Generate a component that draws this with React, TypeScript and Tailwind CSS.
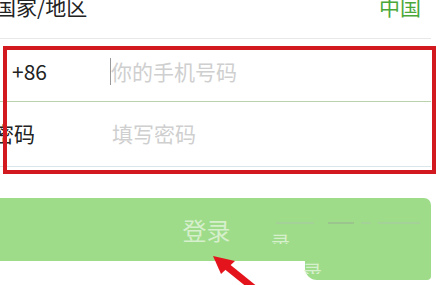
import React from "react";

const cjk = "font-['Noto_Sans_CJK_SC','Noto_Sans',sans-serif]";

export default function App() {
  return (
    <div className={`relative w-[446px] h-[285px] overflow-hidden bg-white ${cjk}`}>
      {/* Country row */}
      <div className="flex justify-between w-[431px] h-[39px] border-b border-[#e8e8e8]">
        <span className="-ml-[5px] -mt-[4px] text-[21px] leading-[21px] text-[#222]">国家/地区</span>
        <span className="mr-[10px] -mt-[4px] text-[21px] leading-[21px] text-[#4aa83a]">中国</span>
      </div>
      {/* Phone row */}
      <div className="flex items-center w-[431px] h-[63px] pt-[3px] border-b border-[#b9d3ad]">
        <span className="ml-[12px] w-[98px] text-[21px] text-[#222]">+86</span>
        <span className="w-[1px] h-[27px] bg-[#999]"></span>
        <span className="text-[21px] text-[#cfcfcf]">你的手机号码</span>
      </div>
      {/* Password row */}
      <div className="flex items-center w-[431px] h-[65px] border-b border-[#dbe6ea]">
        <span className="-ml-[7px] w-[119px] text-[21px] text-[#222]">密码</span>
        <span className="text-[21px] text-[#cfcfcf]">填写密码</span>
      </div>
      {/* Login button */}
      <div className="mt-[31px] flex items-center justify-center w-[431px] h-[63px] rounded-tr-[7px] bg-[#9edc8a]">
        <span className="ml-[-18px] text-[24px] text-[#d6efcc]">登录</span>
      </div>

      {/* screenshot artifacts */}
      <div className="absolute left-[305px] top-[255px] w-[126px] h-[25px] rounded-bl-[12px] rounded-br-[4px] bg-[#9edc8a]"></div>
      <div className="absolute left-[276px] top-[222px] w-[38px] h-[2px] bg-[#a9c9a0] opacity-60"></div>
      <div className="absolute left-[328px] top-[222px] w-[26px] h-[2px] bg-[#98b890] opacity-60"></div>
      <div className="absolute left-[361px] top-[222px] w-[10px] h-[2px] bg-[#a9c9a0] opacity-60"></div>
      <div className="absolute left-[378px] top-[222px] w-[42px] h-[2px] bg-[#a9c9a0] opacity-60"></div>
      <div className="absolute left-[271px] top-[232px] h-[12px] overflow-hidden">
        <span className="block text-[19px] leading-[19px] text-[#d6efcc]">录</span>
      </div>
      <div className="absolute left-[303px] top-[261px] h-[13px] overflow-hidden">
        <span className="block text-[19px] leading-[19px] text-[#d6efcc]">录</span>
      </div>

      {/* red annotation box */}
      <div className="absolute left-[3px] top-[46px] w-[433px] h-[128px] border-[4px] border-[#d2191f]"></div>

      {/* red arrow */}
      <svg className="absolute left-0 top-0" width="446" height="285" viewBox="0 0 446 285">
        <polygon points="213,256 235,261 221,274" fill="#e3141c" />
        <line x1="225" y1="265" x2="256" y2="290" stroke="#e3141c" strokeWidth="7" />
      </svg>
    </div>
  );
}
